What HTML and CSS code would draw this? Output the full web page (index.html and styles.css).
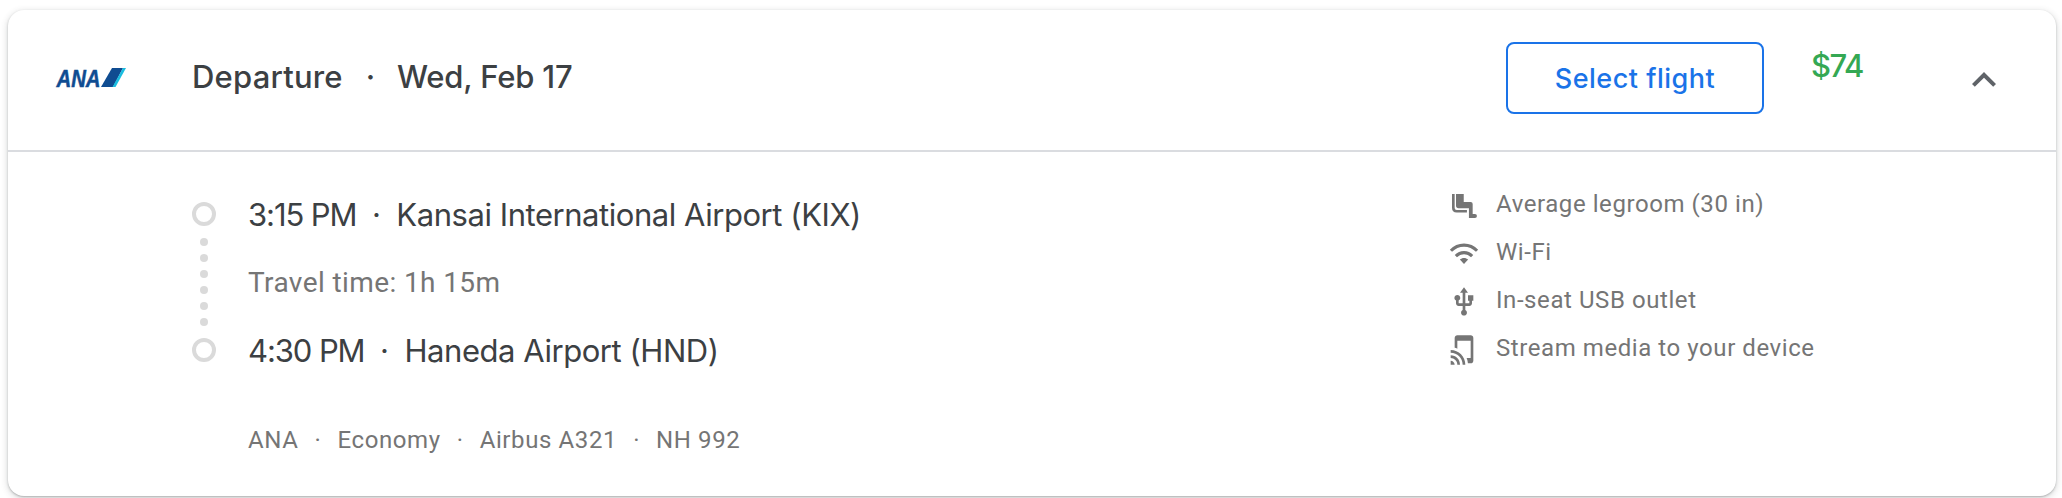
FILE: index.html
```
<!DOCTYPE html>
<html lang="en">
<head>
  <meta charset="UTF-8" />
  <meta name="viewport" content="width=device-width, initial-scale=1" />
  <title>Departure flight</title>
  <link rel="stylesheet" href="styles.css">
</head>
<body>
  <div class="previous-card"></div>
  <main class="card">
    <header>
      <svg class="logo" viewBox="0 0 72 24" role="img" aria-label="ANA">
        <text x="1.5" y="20.700" textLength="44" lengthAdjust="spacingAndGlyphs">ANA</text>
        <path fill="#0f4c91" d="M46 21 57 2h11L58 21z" />
        <path fill="#19bde0" d="M57.500 21 68 2h3L60.500 21z" />
      </svg>
      <h1><span class="label">Departure</span><span class="dot">·</span><span class="date">Wed, Feb 17</span></h1>
      <button class="select" type="button">Select flight</button>
      <span class="price">$74</span>
      <svg class="chevron" viewBox="0 0 24 24"><path d="M12 8l-6 6 1.410 1.410L12 10.830l4.590 4.580L18 14z" /></svg>
    </header>

    <section class="details">
      <div class="timeline">
        <i class="stop"></i>
        <div class="dots"><i></i><i></i><i></i><i></i><i></i><i></i></div>
        <i class="stop"></i>
      </div>

      <div class="trip">
        <div class="airport"><span class="time">3:15 PM</span><span class="dot">·</span><span class="name">Kansai International Airport (KIX)</span></div>
        <div class="duration">Travel time: 1h 15m</div>
        <div class="airport"><span class="time">4:30 PM</span><span class="dot">·</span><span class="name">Haneda Airport (HND)</span></div>
        <div class="info">
          <span>ANA</span><span class="dot">·</span><span>Economy</span><span class="dot">·</span><span>Airbus A321</span><span class="dot">·</span><span>NH 992</span>
        </div>
      </div>

      <ul class="amenities">
        <li>
          <svg viewBox="0 0 24 24"><path d="M3 3h2v10.500q0 1.500 1.500 1.500h7.700v1.800H6.500Q3 16.800 3 13.300zM6 3h5.800v6h5.200q1.500 0 1.500 1.500V18h1.700q1.500 0 1.500 1.500T20.200 21h-4.500v-7.400H8q-2 0-2-2z" /></svg>
          Average legroom (30 in)
        </li>
        <li>
          <svg viewBox="0 0 24 24">
            <path class="wave" d="M2.200 9.600C7.600 3.900 16.400 3.900 21.800 9.600M5.900 13.600c3.400-3.500 8.800-3.500 12.200 0" />
            <path d="M8.900 16.200c1.700-1.700 4.500-1.700 6.200 0L12 19.500z" />
          </svg>
          Wi-Fi
        </li>
        <li>
          <svg viewBox="0 0 24 24"><path d="M15 7v4h1v2h-3V5h2l-3-4-3 4h2v8H8v-2.070c.7-.37 1.200-1.080 1.200-1.930 0-1.210-.99-2.200-2.200-2.200S4.800 7.790 4.800 9c0 .85.5 1.560 1.200 1.930V13c0 1.110.89 2 2 2h3v3.050c-.71.37-1.200 1.100-1.200 1.950 0 1.220.99 2.200 2.200 2.200s2.200-.98 2.200-2.200c0-.85-.49-1.580-1.200-1.950V15h3c1.110 0 2-.89 2-2v-2h1V7z" /></svg>
          In-seat USB outlet
        </li>
        <li>
          <svg viewBox="0 0 24 24"><path d="M2 16v2c2.760 0 5 2.240 5 5h2c0-3.870-3.130-7-7-7zm0 4v3h3c0-1.660-1.340-3-3-3zm0-8v2c4.970 0 9 4.030 9 9h2c0-6.080-4.920-11-11-11zM17 1.010L7 1c-1.100 0-2 .9-2 2v7.370c.69.16 1.360.37 2 .64V5h10v13h-3.030c.52 1.250.84 2.590.95 4H17c1.100 0 2-.9 2-2V3c0-1.100-.9-1.990-2-1.990z" /></svg>
          Stream media to your device
        </li>
      </ul>
    </section>
  </main>
</body>
</html>
```
FILE: styles.css
```
* {
  box-sizing: border-box;
}

body {
  margin: 0;
  height: 498px;
  overflow: hidden;
  background: #fff;
  color: #3c4043;
  font-family: Inter, 'Liberation Sans', sans-serif;
}

.previous-card {
  height: 0;
  margin: 0 8px 10px;
  box-shadow: 0 0 3px rgba(60, 64, 67, 0.2);
}

.card {
  width: 2048px;
  height: 486px;
  margin-left: 8px;
  border-radius: 16px;
  background: #fff;
  box-shadow: 0 1px 2px rgba(60, 64, 67, 0.3), 0 2px 6px 1px rgba(60, 64, 67, 0.18);
}

header {
  display: flex;
  height: 142px;
  border-bottom: 2px solid #dadce0;
}

.logo {
  width: 72px;
  height: 24px;
  margin: 56px 0 0 47px;
  overflow: visible;
}

.logo text {
  font: italic bold 23px/1 'Liberation Sans', sans-serif;
  fill: #0f4c91;
  stroke: #0f4c91;
  stroke-width: 0.5;
}

.dot {
  text-align: center;
}

h1 {
  display: flex;
  width: 1314px;
  margin: 45px 0 0 65px;
  font-size: 31px;
  font-weight: 500;
  line-height: 44px;
  white-space: nowrap;
}

h1 .label {
  width: 152px;
  letter-spacing: 0.2px;
}

h1 .dot {
  width: 53px;
}

h1 .date {
  letter-spacing: -0.2px;
}

.select {
  width: 258px;
  height: 72px;
  margin-top: 32px;
  padding: 0;
  border: 2px solid #1a73e8;
  border-radius: 8px;
  background: #fff;
  color: #1a73e8;
  font: 500 27px Inter, sans-serif;
  letter-spacing: 0.5px;
}

.price {
  width: 149px;
  margin: 34px 0 0 47px;
  color: #34a853;
  font-size: 31px;
  font-weight: 500;
  line-height: 44px;
  letter-spacing: -1.5px;
}

.chevron {
  width: 48px;
  height: 48px;
  margin-top: 46px;
  fill: #5f6368;
}

.details {
  display: flex;
}

.timeline {
  width: 24px;
  margin: 50px 0 0 184px;
}

.stop {
  display: block;
  width: 24px;
  height: 24px;
  border: 4px solid #dadada;
  border-radius: 50%;
}

.dots {
  display: flex;
  flex-direction: column;
  align-items: center;
  gap: 8px;
  padding: 12px 0;
}

.dots i {
  width: 8px;
  height: 8px;
  border-radius: 50%;
  background: #dadada;
}

.trip {
  width: 1200px;
  margin: 41px 0 0 32px;
  white-space: nowrap;
}

.airport {
  display: flex;
  font-size: 31px;
  line-height: 44px;
}

.airport .time {
  letter-spacing: -1.1px;
}

.airport .dot {
  width: 40px;
}

.airport .name {
  letter-spacing: -0.45px;
}

.duration {
  margin: 24px 0;
  color: #757575;
  font: 28px/44px Roboto, sans-serif;
  letter-spacing: 0.4px;
}

.info {
  display: flex;
  margin-top: 45px;
  color: #757575;
  font: 24px/44px Roboto, sans-serif;
  letter-spacing: 0.6px;
}

.info .dot {
  width: 39px;
}

.amenities {
  margin: 28px 0 0;
  padding: 0;
  list-style: none;
  color: #757575;
  font: 24px/48px Roboto, sans-serif;
  letter-spacing: 0.57px;
}

.amenities li {
  display: flex;
  height: 48px;
}

.amenities svg {
  width: 32px;
  height: 32px;
  margin: 10px 16px 0 0;
  fill: #757575;
}

.amenities .wave {
  fill: none;
  stroke: #757575;
  stroke-width: 2.3;
}
```
